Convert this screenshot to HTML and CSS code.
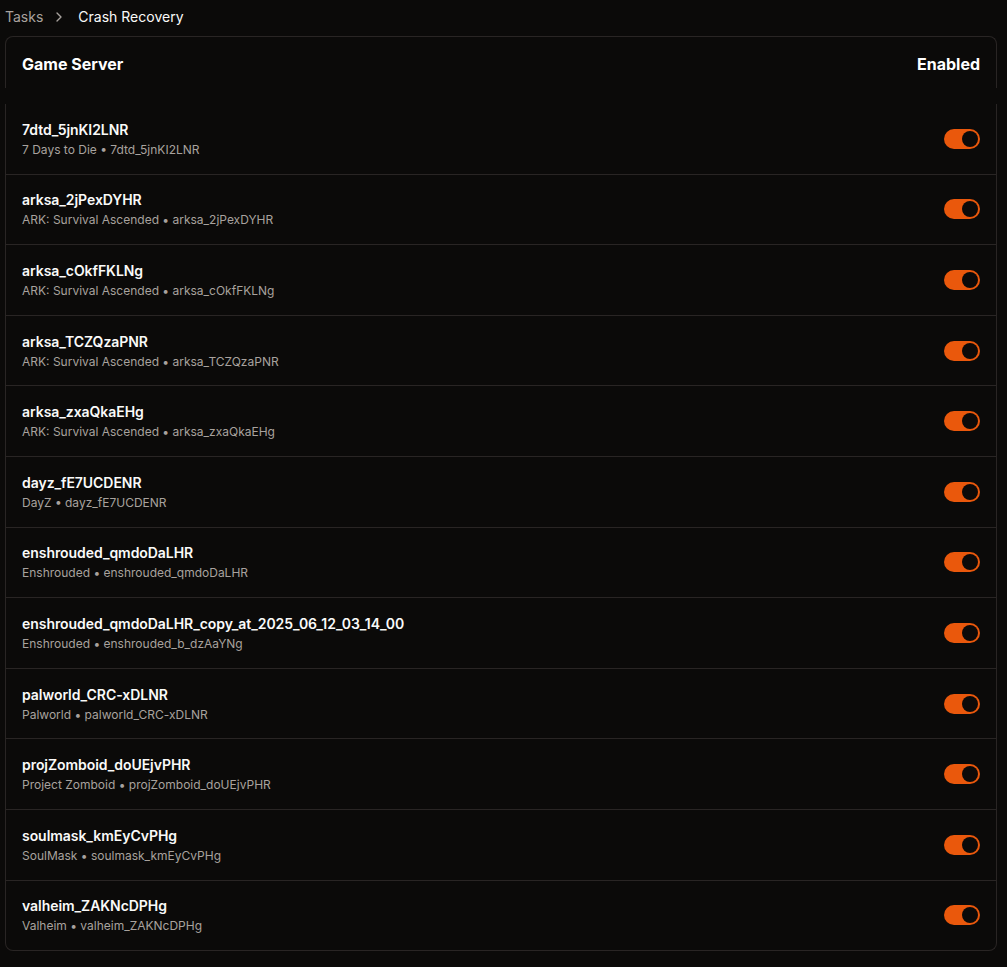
FILE: index.html
```html
<!DOCTYPE html>
<html lang="en">
<head>
<meta charset="utf-8">
<title>Crash Recovery</title>
<link rel="stylesheet" href="styles.css">
</head>
<body>
<div class="page">
  <nav class="crumbs">
    <span class="crumb-muted">Tasks</span>
    <svg class="chev" width="16" height="16" viewBox="0 0 24 24" fill="none" stroke="currentColor" stroke-width="2" stroke-linecap="round" stroke-linejoin="round"><path d="M9 18l6-6-6-6"/></svg>
    <span class="crumb-current">Crash Recovery</span>
  </nav>
  <div class="card-head">
    <span>Game Server</span>
    <span>Enabled</span>
  </div>
  <div class="gap"></div>
  <div class="card-body">
    <div class="row"><div class="info"><div class="name">7dtd_5jnKI2LNR</div><div class="sub">7 Days to Die • 7dtd_5jnKI2LNR</div></div><span class="toggle"><span class="knob"></span></span></div>
    <div class="row"><div class="info"><div class="name">arksa_2jPexDYHR</div><div class="sub">ARK: Survival Ascended • arksa_2jPexDYHR</div></div><span class="toggle"><span class="knob"></span></span></div>
    <div class="row"><div class="info"><div class="name">arksa_cOkfFKLNg</div><div class="sub">ARK: Survival Ascended • arksa_cOkfFKLNg</div></div><span class="toggle"><span class="knob"></span></span></div>
    <div class="row"><div class="info"><div class="name">arksa_TCZQzaPNR</div><div class="sub">ARK: Survival Ascended • arksa_TCZQzaPNR</div></div><span class="toggle"><span class="knob"></span></span></div>
    <div class="row"><div class="info"><div class="name">arksa_zxaQkaEHg</div><div class="sub">ARK: Survival Ascended • arksa_zxaQkaEHg</div></div><span class="toggle"><span class="knob"></span></span></div>
    <div class="row"><div class="info"><div class="name">dayz_fE7UCDENR</div><div class="sub">DayZ • dayz_fE7UCDENR</div></div><span class="toggle"><span class="knob"></span></span></div>
    <div class="row"><div class="info"><div class="name">enshrouded_qmdoDaLHR</div><div class="sub">Enshrouded • enshrouded_qmdoDaLHR</div></div><span class="toggle"><span class="knob"></span></span></div>
    <div class="row"><div class="info"><div class="name">enshrouded_qmdoDaLHR_copy_at_2025_06_12_03_14_00</div><div class="sub">Enshrouded • enshrouded_b_dzAaYNg</div></div><span class="toggle"><span class="knob"></span></span></div>
    <div class="row"><div class="info"><div class="name">palworld_CRC-xDLNR</div><div class="sub">Palworld • palworld_CRC-xDLNR</div></div><span class="toggle"><span class="knob"></span></span></div>
    <div class="row"><div class="info"><div class="name">projZomboid_doUEjvPHR</div><div class="sub">Project Zomboid • projZomboid_doUEjvPHR</div></div><span class="toggle"><span class="knob"></span></span></div>
    <div class="row"><div class="info"><div class="name">soulmask_kmEyCvPHg</div><div class="sub">SoulMask • soulmask_kmEyCvPHg</div></div><span class="toggle"><span class="knob"></span></span></div>
    <div class="row"><div class="info"><div class="name">valheim_ZAKNcDPHg</div><div class="sub">Valheim • valheim_ZAKNcDPHg</div></div><span class="toggle"><span class="knob"></span></span></div>
  </div>
</div>
</body>
</html>
```

FILE: styles.css
```css
* { box-sizing: border-box; }
html, body {
  margin: 0;
  padding: 0;
  background: #0b0a09;
  color: #fafaf9;
  font-family: Inter, "Noto Sans", "Liberation Sans", sans-serif;
}
.page {
  padding: 7px 10px 18px 5px;
}
.crumbs {
  display: flex;
  align-items: center;
  height: 20px;
  font-size: 14px;
  line-height: 20px;
  margin-bottom: 9px;
}
.crumb-muted { color: #a8a29e; }
.chev {
  color: #a8a29e;
  margin: 0 11px 0 8px;
}
.crumb-current { color: #fafaf9; }
.card-head {
  height: 52px;
  display: flex;
  align-items: center;
  justify-content: space-between;
  padding: 2px 16px 0;
  border: 1px solid #292524;
  border-bottom: none;
  border-radius: 8px 8px 0 0;
  font-size: 16px;
  font-weight: 700;
  color: #ffffff;
}
.gap { height: 16px; }
.card-body {
  border: 1px solid #292524;
  border-top: none;
  border-radius: 0 0 8px 8px;
}
.row {
  display: flex;
  align-items: center;
  justify-content: space-between;
  padding: 15.8px 16px;
  border-bottom: 1px solid #292524;
}
.row:last-child { border-bottom: none; }
.name {
  font-size: 14px;
  line-height: 20px;
  font-weight: 600;
  color: #fafaf9;
  letter-spacing: -0.05px;
}
.sub {
  margin-top: 2px;
  font-size: 12px;
  line-height: 16px;
  color: #a8a29e;
}
.toggle {
  width: 36px;
  height: 20px;
  border-radius: 10px;
  background: #ea580c;
  display: flex;
  align-items: center;
  justify-content: flex-end;
  padding: 2px;
}
.knob {
  width: 16px;
  height: 16px;
  border-radius: 50%;
  background: #0c0a09;
}
```
